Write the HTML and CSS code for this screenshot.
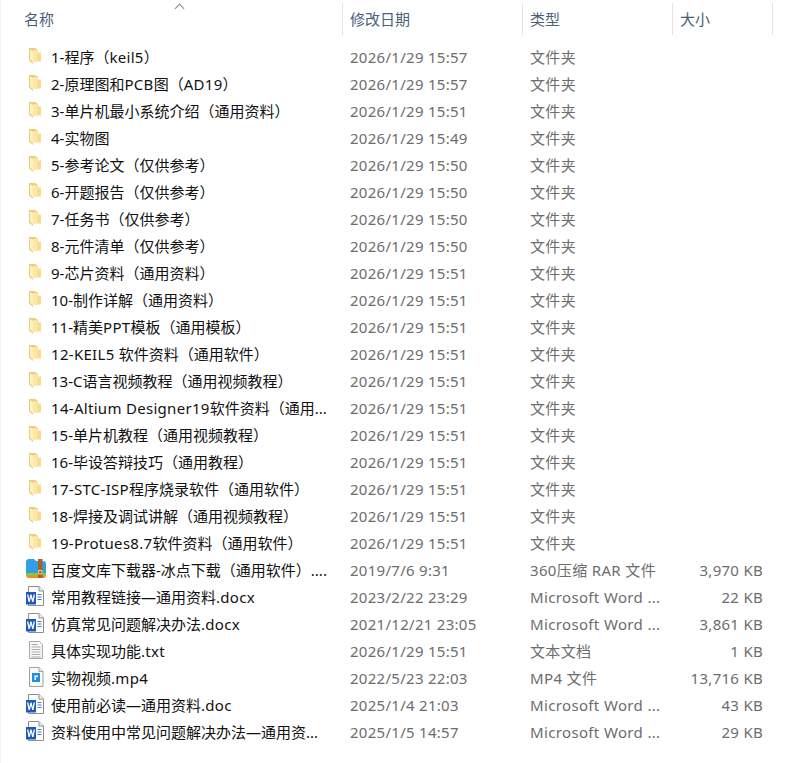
FILE: index.html
```html
<!DOCTYPE html>
<html lang="zh-CN">
<head>
    <meta charset="UTF-8">
    <title>文件列表</title>
    <link rel="stylesheet" href="styles.css">
</head>
<body>
    <svg class="defs" width="0" height="0">
        <symbol id="i-folder" viewBox="0 0 12 16">
            <path d="M0 0h6l3 2v11H4v3L0 12.500z" fill="#eccb7a"/>
            <path d="M8 4.500h4V13.500H4V8z" fill="#fadb87"/>
            <path d="M1 1.200 4 3v11.500l-3-3z" fill="#fdf0c2"/>
            <path d="M4 2h4.500v11.500H4z" fill="#fce7a6"/>
        </symbol>
        <symbol id="i-rar" viewBox="0 0 20 19">
            <path d="M0 3q0-3 3-3h5l2 2h7q3 0 3 3v10H0z" fill="#2f9fea"/>
            <path d="M0 14h20v2q0 3-3 3H3q-3 0-3-3z" fill="#f28a1c"/>
            <path d="M0 14h20v2.500H0z" fill="#8cc63f"/>
            <path d="M12 0h4.500v19H12z" fill="#a8641f"/>
            <path d="M12.500 11.500h3.500v3.500h-3.500z" fill="none" stroke="#f1d28c"/>
        </symbol>
        <symbol id="i-word" viewBox="0 0 19 20">
            <path d="M2.500.5h10.500l4.500 4.500v14.500h-15z" fill="#fff" stroke="#8e8e8e"/>
            <path d="M13 .5V5h4.500" fill="#eee" stroke="#8e8e8e"/>
            <path d="M11.500 8.500h4M11.500 11h4M11.500 13.500h4" stroke="#3d7bd0" fill="none"/>
            <path d="M0 6h10v12.500H0z" fill="#2058bc"/>
            <path d="m1 8.500 1.500 7.500h1.300l1.200-4.500 1.200 4.500h1.300L9 8.500H7.600l-.8 4.800-1.200-4.800h-1.200l-1.200 4.800-.8-4.800z" fill="#fff"/>
        </symbol>
        <symbol id="i-txt" viewBox="0 0 19 20">
            <path d="M3.500 1.500h10l3 3v14h-13z" fill="#f7f7f7" stroke="#a8a8a8"/>
            <path d="M5.500 4.500h6M5.500 7h9M5.500 9.500h9M5.500 12h9M5.500 14.500h9M5.500 17h9" stroke="#aeaeae" fill="none"/>
        </symbol>
        <symbol id="i-video" viewBox="0 0 19 20">
            <path d="M3.500.5h9.500l4 4v15h-13.500z" fill="#fafafa" stroke="#a0a0a0"/>
            <path d="M13 .5v4h4" fill="#eee" stroke="#a0a0a0"/>
            <path d="M6 6h8v9H6z" fill="#1e90e0"/>
            <path d="M8.500 8.500h3.500V10H10v3H8.500z" fill="#fff"/>
        </symbol>
    </svg>

    <div class="explorer">
        <div class="sort-arrow"></div>
        <div class="header">
            <div class="head-cell name-head">名称</div>
            <div class="head-cell">修改日期</div>
            <div class="head-cell">类型</div>
            <div class="head-cell">大小</div>
        </div>

        <div class="rows">
            <div class="row"><span class="name"><svg class="icon folder"><use href="#i-folder"/></svg>1-程序（<span class="en">keil5</span>）</span><span class="date">2026/1/29 15:57</span><span class="type">文件夹</span><span class="size"></span></div>
            <div class="row"><span class="name"><svg class="icon folder"><use href="#i-folder"/></svg>2-原理图和<span class="en">PCB</span>图（<span class="en">AD19</span>）</span><span class="date">2026/1/29 15:57</span><span class="type">文件夹</span><span class="size"></span></div>
            <div class="row"><span class="name"><svg class="icon folder"><use href="#i-folder"/></svg>3-单片机最小系统介绍（通用资料）</span><span class="date">2026/1/29 15:51</span><span class="type">文件夹</span><span class="size"></span></div>
            <div class="row"><span class="name"><svg class="icon folder"><use href="#i-folder"/></svg>4-实物图</span><span class="date">2026/1/29 15:49</span><span class="type">文件夹</span><span class="size"></span></div>
            <div class="row"><span class="name"><svg class="icon folder"><use href="#i-folder"/></svg>5-参考论文（仅供参考）</span><span class="date">2026/1/29 15:50</span><span class="type">文件夹</span><span class="size"></span></div>
            <div class="row"><span class="name"><svg class="icon folder"><use href="#i-folder"/></svg>6-开题报告（仅供参考）</span><span class="date">2026/1/29 15:50</span><span class="type">文件夹</span><span class="size"></span></div>
            <div class="row"><span class="name"><svg class="icon folder"><use href="#i-folder"/></svg>7-任务书（仅供参考）</span><span class="date">2026/1/29 15:50</span><span class="type">文件夹</span><span class="size"></span></div>
            <div class="row"><span class="name"><svg class="icon folder"><use href="#i-folder"/></svg>8-元件清单（仅供参考）</span><span class="date">2026/1/29 15:50</span><span class="type">文件夹</span><span class="size"></span></div>
            <div class="row"><span class="name"><svg class="icon folder"><use href="#i-folder"/></svg>9-芯片资料（通用资料）</span><span class="date">2026/1/29 15:51</span><span class="type">文件夹</span><span class="size"></span></div>
            <div class="row"><span class="name"><svg class="icon folder"><use href="#i-folder"/></svg>10-制作详解（通用资料）</span><span class="date">2026/1/29 15:51</span><span class="type">文件夹</span><span class="size"></span></div>
            <div class="row"><span class="name"><svg class="icon folder"><use href="#i-folder"/></svg>11-精美<span class="en">PPT</span>模板（通用模板）</span><span class="date">2026/1/29 15:51</span><span class="type">文件夹</span><span class="size"></span></div>
            <div class="row"><span class="name"><svg class="icon folder"><use href="#i-folder"/></svg><span class="en">12-KEIL5&nbsp;</span>软件资料（通用软件）</span><span class="date">2026/1/29 15:51</span><span class="type">文件夹</span><span class="size"></span></div>
            <div class="row"><span class="name"><svg class="icon folder"><use href="#i-folder"/></svg>13-C语言视频教程（通用视频教程）</span><span class="date">2026/1/29 15:51</span><span class="type">文件夹</span><span class="size"></span></div>
            <div class="row"><span class="name"><svg class="icon folder"><use href="#i-folder"/></svg><span class="en">14-Altium&nbsp;Designer19</span>软件资料（通用...</span><span class="date">2026/1/29 15:51</span><span class="type">文件夹</span><span class="size"></span></div>
            <div class="row"><span class="name"><svg class="icon folder"><use href="#i-folder"/></svg>15-单片机教程（通用视频教程）</span><span class="date">2026/1/29 15:51</span><span class="type">文件夹</span><span class="size"></span></div>
            <div class="row"><span class="name"><svg class="icon folder"><use href="#i-folder"/></svg>16-毕设答辩技巧（通用教程）</span><span class="date">2026/1/29 15:51</span><span class="type">文件夹</span><span class="size"></span></div>
            <div class="row"><span class="name"><svg class="icon folder"><use href="#i-folder"/></svg><span class="en">17-STC-ISP</span>程序烧录软件（通用软件）</span><span class="date">2026/1/29 15:51</span><span class="type">文件夹</span><span class="size"></span></div>
            <div class="row"><span class="name"><svg class="icon folder"><use href="#i-folder"/></svg>18-焊接及调试讲解（通用视频教程）</span><span class="date">2026/1/29 15:51</span><span class="type">文件夹</span><span class="size"></span></div>
            <div class="row"><span class="name"><svg class="icon folder"><use href="#i-folder"/></svg><span class="en">19-Protues8.7</span>软件资料（通用软件）</span><span class="date">2026/1/29 15:51</span><span class="type">文件夹</span><span class="size"></span></div>
            <div class="row"><span class="name"><svg class="icon rar"><use href="#i-rar"/></svg>百度文库下载器-冰点下载（通用软件）....</span><span class="date">2019/7/6 9:31</span><span class="type">360压缩 RAR 文件</span><span class="size">3,970 KB</span></div>
            <div class="row"><span class="name"><svg class="icon doc"><use href="#i-word"/></svg>常用教程链接—通用资料<span class="en">.docx</span></span><span class="date">2023/2/22 23:29</span><span class="type">Microsoft Word ...</span><span class="size">22 KB</span></div>
            <div class="row"><span class="name"><svg class="icon doc"><use href="#i-word"/></svg>仿真常见问题解决办法<span class="en">.docx</span></span><span class="date">2021/12/21 23:05</span><span class="type">Microsoft Word ...</span><span class="size">3,861 KB</span></div>
            <div class="row"><span class="name"><svg class="icon doc"><use href="#i-txt"/></svg>具体实现功能<span class="en">.txt</span></span><span class="date">2026/1/29 15:51</span><span class="type">文本文档</span><span class="size">1 KB</span></div>
            <div class="row"><span class="name"><svg class="icon doc"><use href="#i-video"/></svg>实物视频<span class="en">.mp4</span></span><span class="date">2022/5/23 22:03</span><span class="type">MP4 文件</span><span class="size">13,716 KB</span></div>
            <div class="row"><span class="name"><svg class="icon doc"><use href="#i-word"/></svg>使用前必读—通用资料<span class="en">.doc</span></span><span class="date">2025/1/4 21:03</span><span class="type">Microsoft Word ...</span><span class="size">43 KB</span></div>
            <div class="row"><span class="name"><svg class="icon doc"><use href="#i-word"/></svg>资料使用中常见问题解决办法—通用资...</span><span class="date">2025/1/5 14:57</span><span class="type">Microsoft Word ...</span><span class="size">29 KB</span></div>
        </div>
    </div>
</body>
</html>
```

FILE: styles.css
```css
html, body {
    margin: 0;
    height: 100%;
}

body {
    font-family: "Noto Sans", "Noto Sans CJK SC", sans-serif;
    font-size: 15px;
    color: #111;
    background-color: white;
    overflow: hidden;
}

.defs {
    position: absolute;
}

.explorer {
    position: relative;
    height: 100%;
    box-sizing: border-box;
    padding-top: 3px;
    border-left: 1px solid #f2f2f2;
}

.sort-arrow {
    position: absolute;
    left: 175px;
    top: 5px;
    width: 6px;
    height: 6px;
    border-top: 1px solid #888;
    border-left: 1px solid #888;
    transform: rotate(45deg);
}

.header {
    display: grid;
    grid-template-columns: 342px 180px 150px 100px;
    height: 32px;
}

.head-cell {
    display: flex;
    align-items: center;
    padding-left: 7px;
    color: #4c607a;
    border-right: 1px solid #e3e3e3;
    box-sizing: border-box;
    line-height: 32px;
}

.name-head {
    padding-left: 23px;
}

.rows {
    padding-top: 8px;
}

.row {
    display: grid;
    grid-template-columns: 342px 180px 150px 90px;
    height: 27px;
    align-items: center;
    white-space: nowrap;
}

.name {
    display: flex;
    align-items: center;
    align-self: stretch;
    padding-left: 50px;
    position: relative;
}

.en {
    letter-spacing: 0.3px;
}

.date, .type {
    color: #6d6d6d;
    padding-left: 7px;
}

.date, .size {
    letter-spacing: 0.28px;
}

.type {
    letter-spacing: 0.35px;
}

.size {
    color: #6d6d6d;
    text-align: right;
}

.icon {
    position: absolute;
}

.folder {
    left: 28px;
    top: 5px;
    width: 12px;
    height: 16px;
}

.rar {
    left: 25px;
    top: 3px;
    width: 20px;
    height: 19px;
}

.doc {
    left: 25px;
    top: 3px;
    width: 19px;
    height: 20px;
}
```
